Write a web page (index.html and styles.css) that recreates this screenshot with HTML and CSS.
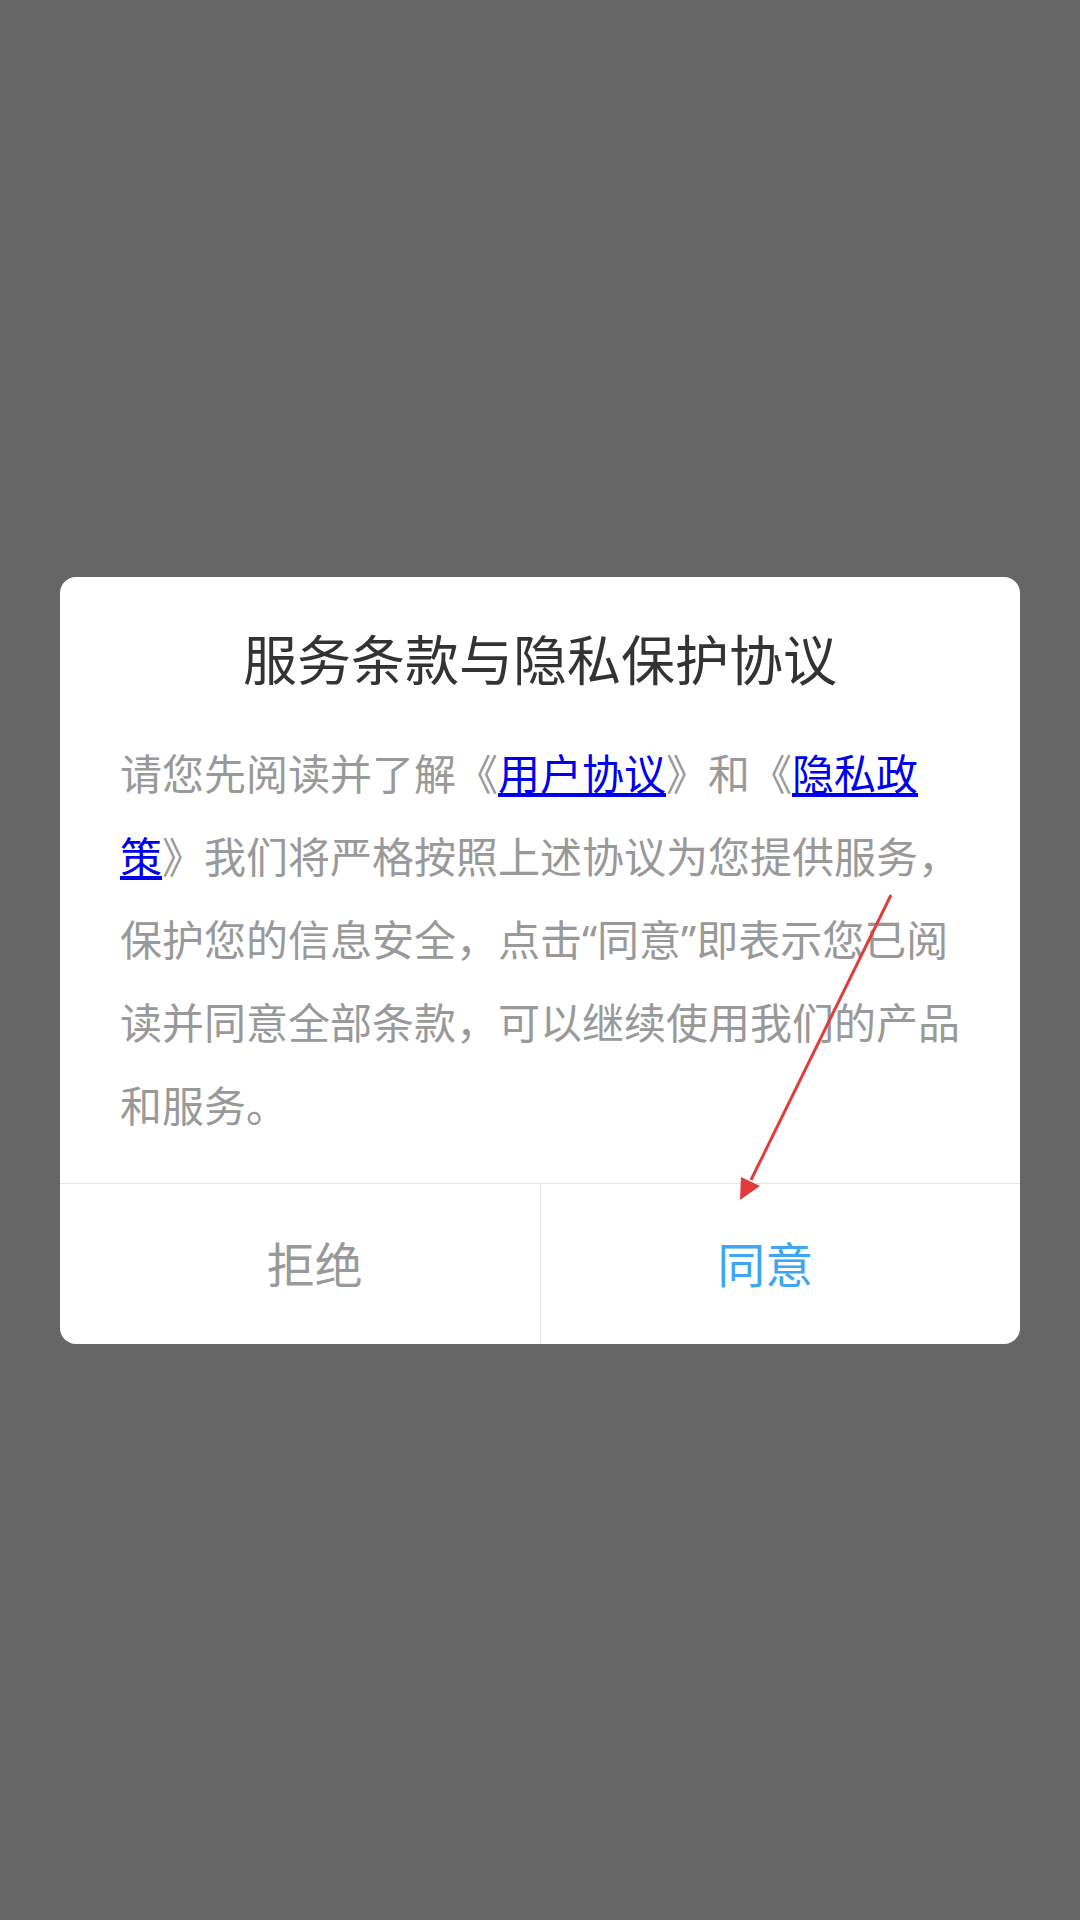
FILE: index.html
```html
<!DOCTYPE html>
<html lang="zh-CN">
<head>
<meta charset="UTF-8">
<title>服务条款与隐私保护协议</title>
<meta name="viewport" content="width=device-width, initial-scale=1">
<link rel="stylesheet" href="styles.css">
</head>
<body>
  <!-- Dimmed screen with the consent dialog -->
  <div class="overlay">
    <div class="dialog">
      <h1 class="dialog-title">服务条款与隐私保护协议</h1>
      <p class="dialog-text">请您先阅读并了解《<a href="#">用户协议</a>》和《<a href="#">隐私政<br>策</a>》我们将严格按照上述协议为您提供服务，保护您的信息安全，点击“同意”即表示您已阅读并同意全部条款，可以继续使用我们的产品和服务。</p>
      <div class="dialog-actions">
        <button class="btn btn-refuse">拒绝</button>
        <button class="btn btn-agree">同意</button>
      </div>
    </div>

    <!-- Annotation arrow pointing at the agree button -->
    <svg class="hint-arrow" width="1080" height="1920" viewBox="0 0 1080 1920">
      <line x1="891" y1="895" x2="751" y2="1180" stroke="#e03c3c" stroke-width="3" />
      <polygon points="740,1200 741,1177 760,1186" fill="#e03c3c" />
    </svg>
  </div>
</body>
</html>
```

FILE: styles.css
```css
/* Root Variables */
:root {
  --dim: #666666;
  --card-bg: #ffffff;
  --title: #333333;
  --text: #999999;
  --link: #0000ee;
  --accent: #3ea6f2;
  --line: #e6e6e6;
}

/* Global Reset */
* { box-sizing: border-box; margin: 0; padding: 0; }
html, body { height: 100%; }
body {
  font-family: "Noto Sans CJK SC", sans-serif;
  background: var(--dim);
}

/* Overlay */
.overlay {
  position: relative;
  min-height: 1920px;
  display: flex;
  align-items: center;
  justify-content: center;
  padding: 0 60px;
}

/* Dialog Card */
.dialog {
  width: 100%;
  background: var(--card-bg);
  border-radius: 16px;
  overflow: hidden;
}
.dialog-title {
  text-align: center;
  font-size: 54px;
  line-height: 60px;
  font-weight: 400;
  color: var(--title);
  padding-top: 51px;
  margin-bottom: 44px;
}
.dialog-text {
  padding: 0 58px 36px 60px;
  font-family: "Noto Sans", "Noto Sans CJK SC", sans-serif;
  font-size: 42px;
  line-height: 83px;
  color: var(--text);
}
.dialog-text a { color: var(--link); }

/* Buttons */
.dialog-actions {
  display: flex;
  padding: 0 30px;
  border-top: 1px solid var(--line);
}
.btn {
  flex: 1;
  height: 160px;
  border: none;
  background: transparent;
  font-family: "Noto Sans CJK SC", sans-serif;
  font-size: 48px;
  padding-bottom: 4px;
  cursor: pointer;
}
.btn-refuse {
  color: var(--text);
  border-right: 1px solid var(--line);
}
.btn-agree { color: var(--accent); }

/* Annotation */
.hint-arrow {
  position: absolute;
  top: 0;
  left: 0;
  pointer-events: none;
}
```
